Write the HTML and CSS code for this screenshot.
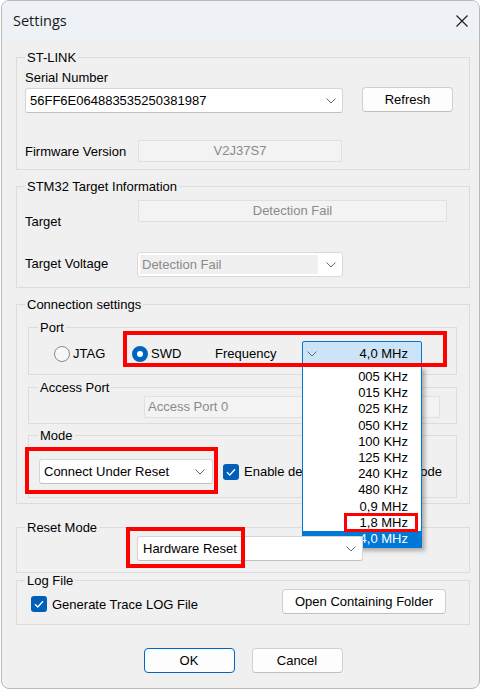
FILE: index.html
```html
<!DOCTYPE html>
<html>
<head>
<meta charset="utf-8">
<title>Settings</title>
<link rel="stylesheet" href="styles.css">
</head>
<body>
<div class="window">
  <div class="titlebar">
    <span class="title">Settings</span>
    <svg class="close" viewBox="0 0 12 12"><path d="M0.5 0.5L11.5 11.5M11.5 0.5L0.5 11.5"/></svg>
  </div>
  <div class="content">
    <fieldset class="group g-stlink">
      <legend>ST-LINK</legend>
      <div class="lbl-serial">Serial Number</div>
      <div class="row r-serial">
        <div class="combo combo-serial"><span>56FF6E064883535250381987</span><svg class="chev" viewBox="0 0 10 6"><path d="M0.5 0.5L5 5L9.5 0.5"/></svg></div>
        <button class="btn btn-refresh">Refresh</button>
      </div>
      <div class="row r-fw">
        <span class="lbl lbl-fw">Firmware Version</span>
        <div class="field field-fw">V2J37S7</div>
      </div>
    </fieldset>

    <fieldset class="group g-target">
      <legend>STM32 Target Information</legend>
      <div class="row r-target">
        <span class="lbl lbl-target">Target</span>
        <div class="field field-target">Detection Fail</div>
      </div>
      <div class="row r-volt">
        <span class="lbl lbl-volt">Target Voltage</span>
        <div class="combo combo-volt"><span class="dis-text">Detection Fail</span><svg class="chev" viewBox="0 0 10 6"><path d="M0.5 0.5L5 5L9.5 0.5"/></svg></div>
      </div>
    </fieldset>

    <fieldset class="group g-conn">
      <legend>Connection settings</legend>
      <fieldset class="group sub g-port">
        <legend>Port</legend>
        <div class="row r-port">
          <span class="radio-item it-jtag"><span class="radio"></span>JTAG</span>
          <span class="radio-item it-swd"><span class="radio on"></span>SWD</span>
          <span class="freq-lbl">Frequency</span>
          <div class="combo combo-freq">
            <svg class="chev" viewBox="0 0 10 6"><path d="M0.5 0.5L5 5L9.5 0.5"/></svg>
            <span>4,0 MHz</span>
            <ul class="droplist">
              <li>005 KHz</li>
              <li>015 KHz</li>
              <li>025 KHz</li>
              <li>050 KHz</li>
              <li>100 KHz</li>
              <li>125 KHz</li>
              <li>240 KHz</li>
              <li>480 KHz</li>
              <li>0,9 MHz</li>
              <li>1,8 MHz</li>
              <li class="sel">4,0 MHz</li>
              <span class="mark mark-item"></span>
            </ul>
          </div>
        </div>
      </fieldset>
      <fieldset class="group sub g-ap">
        <legend>Access Port</legend>
        <div class="field field-ap">Access Port 0</div>
      </fieldset>
      <fieldset class="group sub g-mode">
        <legend>Mode</legend>
        <div class="row r-mode">
          <div class="combo combo-mode"><span>Connect Under Reset</span><svg class="chev" viewBox="0 0 10 6"><path d="M0.5 0.5L5 5L9.5 0.5"/></svg></div>
          <span class="check-item it-lp"><span class="check"><svg viewBox="0 0 16 16"><path d="M4 8.3L6.8 11L12 5.2"/></svg></span>Enable debug in Low Power mode</span>
        </div>
      </fieldset>
    </fieldset>

    <fieldset class="group g-reset">
      <legend>Reset Mode</legend>
      <div class="combo combo-reset"><span>Hardware Reset</span><svg class="chev" viewBox="0 0 10 6"><path d="M0.5 0.5L5 5L9.5 0.5"/></svg></div>
    </fieldset>

    <fieldset class="group g-log">
      <legend>Log File</legend>
      <div class="row r-log">
        <span class="check-item it-log"><span class="check"><svg viewBox="0 0 16 16"><path d="M4 8.3L6.8 11L12 5.2"/></svg></span>Generate Trace LOG File</span>
        <button class="btn btn-folder">Open Containing Folder</button>
      </div>
    </fieldset>

    <div class="actions">
      <button class="btn btn-ok">OK</button>
      <button class="btn btn-cancel">Cancel</button>
    </div>
  </div>

  <span class="mark mark-port"></span>
  <span class="mark mark-mode"></span>
  <span class="mark mark-reset"></span>
</div>
</body>
</html>
```

FILE: styles.css
```css
* { box-sizing: border-box; }
html, body { margin: 0; padding: 0; background: #ffffff; }
body { font: 13px/15px "Liberation Sans", Arial, sans-serif; color: #000; }

.window {
  position: relative;
  margin-left: 1px;
  width: 479px;
  height: 689px;
  border: 1px solid #b8b8b8;
  border-radius: 8px;
  overflow: hidden;
  background: #f0f0f0;
  display: flex;
  flex-direction: column;
}
.titlebar {
  flex: none;
  height: 39px;
  background: #eef2f7;
  display: flex;
  align-items: center;
  justify-content: space-between;
  padding: 0 11px 0 11px;
}
.title { font: 14.5px/20px "Open Sans", "Noto Sans", sans-serif; color: #1a1a1a; }
.close { width: 12px; height: 12px; fill: none; stroke: #1a1a1a; stroke-width: 1.1; }

.content {
  flex: 1;
  display: flex;
  flex-direction: column;
  padding: 10px 9px 0 14px;
}

.group { margin: 0; padding: 0; border: 1px solid #dcdcdc; min-width: 0; }
.group > legend { padding: 0 2px; margin-left: 8px; line-height: 15px; }
.group.sub { margin: 0 12px 0 11px; }
.group.sub > legend { margin-left: 9px; }

.row { display: flex; align-items: center; }
.lbl { flex: none; }

/* combos */
.combo {
  position: relative;
  flex: none;
  display: flex;
  align-items: center;
  justify-content: space-between;
  height: 25px;
  background: #fff;
  border: 1px solid #d5d5d5;
  border-bottom-color: #c2c2c2;
  border-radius: 3px;
  padding: 0 6px 0 4px;
  white-space: nowrap;
}
.chev { width: 10px; height: 6px; fill: none; stroke: #6b6b6b; stroke-width: 1; flex: none; }

.field {
  flex: none;
  height: 22px;
  background: #f3f3f3;
  border: 1px solid #e0e0e0;
  color: #8a8a8a;
  text-align: center;
  line-height: 20px;
}

/* buttons */
.btn {
  flex: none;
  height: 25px;
  padding: 0;
  margin: 0;
  font: 13px/15px "Liberation Sans", Arial, sans-serif;
  color: #000;
  background: #fdfdfd;
  border: 1px solid #d0d0d0;
  border-bottom-color: #bfbfbf;
  border-radius: 4px;
}

/* ST-LINK */
.g-stlink { padding-bottom: 7px; }
.lbl-serial { margin: 5px 0 0 8px; }
.r-serial { margin: 3px 0 0 8px; }
.combo-serial { width: 318px; }
.btn-refresh { width: 91px; margin-left: 19px; position: relative; top: -1px; }
.r-fw { margin: 27px 0 0 8px; height: 22px; }
.lbl-fw { width: 113px; }
.field-fw { width: 204px; }

/* Target */
.g-target { margin-top: 9px; padding-bottom: 10px; }
.r-target { margin: 6px 0 0 8px; height: 22px; align-items: flex-start; }
.lbl-target { width: 113px; margin-top: 14px; }
.field-target { width: 309px; }
.r-volt { margin: 30px 0 0 8px; }
.lbl-volt { width: 112px; margin-top: -2px; }
.combo-volt { width: 206px; padding: 2px 6px 2px 2px; border-color: #d9d9d9; }
.dis-text {
  width: 178px;
  height: 100%;
  background: #f0f0f0;
  color: #8a8a8a;
  line-height: 19px;
  padding-left: 2px;
}

/* Connection */
.g-conn { margin-top: 9px; padding-bottom: 5px; }
.g-port { margin-top: 8px !important; padding-bottom: 8px; }
.r-port { margin: 6px 0 0 25px; height: 25px; }
.radio-item { display: flex; align-items: center; flex: none; }
.it-jtag { width: 78px; }
.it-swd { width: 83px; }
.radio {
  width: 16px; height: 16px; border-radius: 50%;
  border: 1px solid #8a8a8a; background: #f7f7f7;
  margin-right: 3px; flex: none;
}
.radio.on { border: 5px solid #0067c0; background: #fff; }
.freq-lbl { width: 87px; flex: none; }
.combo-freq {
  width: 120px;
  background: #cce4f7;
  border: 1px solid #0078d4;
  border-radius: 2px;
  padding: 0 13px 0 4px;
}
.droplist {
  position: absolute;
  left: -1px;
  top: 24px;
  width: 120px;
  margin: 0;
  padding: 3px 0 0 0;
  list-style: none;
  background: #fff;
  border: 1px solid #0078d7;
  border-top: none;
  box-shadow: 3px 3px 4px rgba(0, 0, 0, 0.28);
}
.droplist li {
  height: 16.2px;
  line-height: 16px;
  text-align: right;
  padding-right: 13px;
}
.droplist li.sel { background: #0078d7; color: #fff; }

.g-ap { margin-top: 5px !important; padding-bottom: 5px; }
.field-ap { width: 296px; margin: 1px 0 0 115px; text-align: left; padding-left: 3px; }

.g-mode { margin-top: 4px !important; padding-bottom: 13px; }
.r-mode { margin: 16px 0 0 10px; }
.combo-mode { width: 174px; padding-right: 7px; }
.check-item { display: flex; align-items: center; flex: none; white-space: nowrap; }
.check {
  width: 16px; height: 16px; border-radius: 3px;
  background: #005fb8; margin-right: 5px; flex: none;
  display: flex;
}
.check svg { width: 16px; height: 16px; fill: none; stroke: #fff; stroke-width: 1.3; }
.it-lp { margin-left: 10px; }

/* Reset mode */
.g-reset { margin-top: 16px; padding-bottom: 11px; }
.combo-reset { width: 226px; margin: 1px 0 0 120px; padding-left: 5px; }

/* Log */
.g-log { padding-bottom: 10px; }
.r-log { margin: 1px 0 0 14px; height: 25px; }
.it-log { margin-top: 5px; }
.btn-folder { width: 164px; margin-left: auto; margin-right: 23px; }

/* bottom actions */
.actions { display: flex; justify-content: center; gap: 17px; margin-top: 23px; }
.btn-ok, .btn-cancel { width: 91px; }
.btn-ok { border: 1px solid #0067c0; }

/* red annotation frames */
.mark { position: absolute; display: block; border: 4px solid #ff0000; }
.mark-port { left: 121px; top: 330px; width: 324px; height: 36px; }
.mark-mode { left: 23px; top: 446px; width: 193px; height: 47px; }
.mark-reset { left: 124px; top: 526px; width: 119px; height: 41px; }
.mark-item { left: 41px; top: 147px; width: 74px; height: 19px; border-width: 3px; }
```
